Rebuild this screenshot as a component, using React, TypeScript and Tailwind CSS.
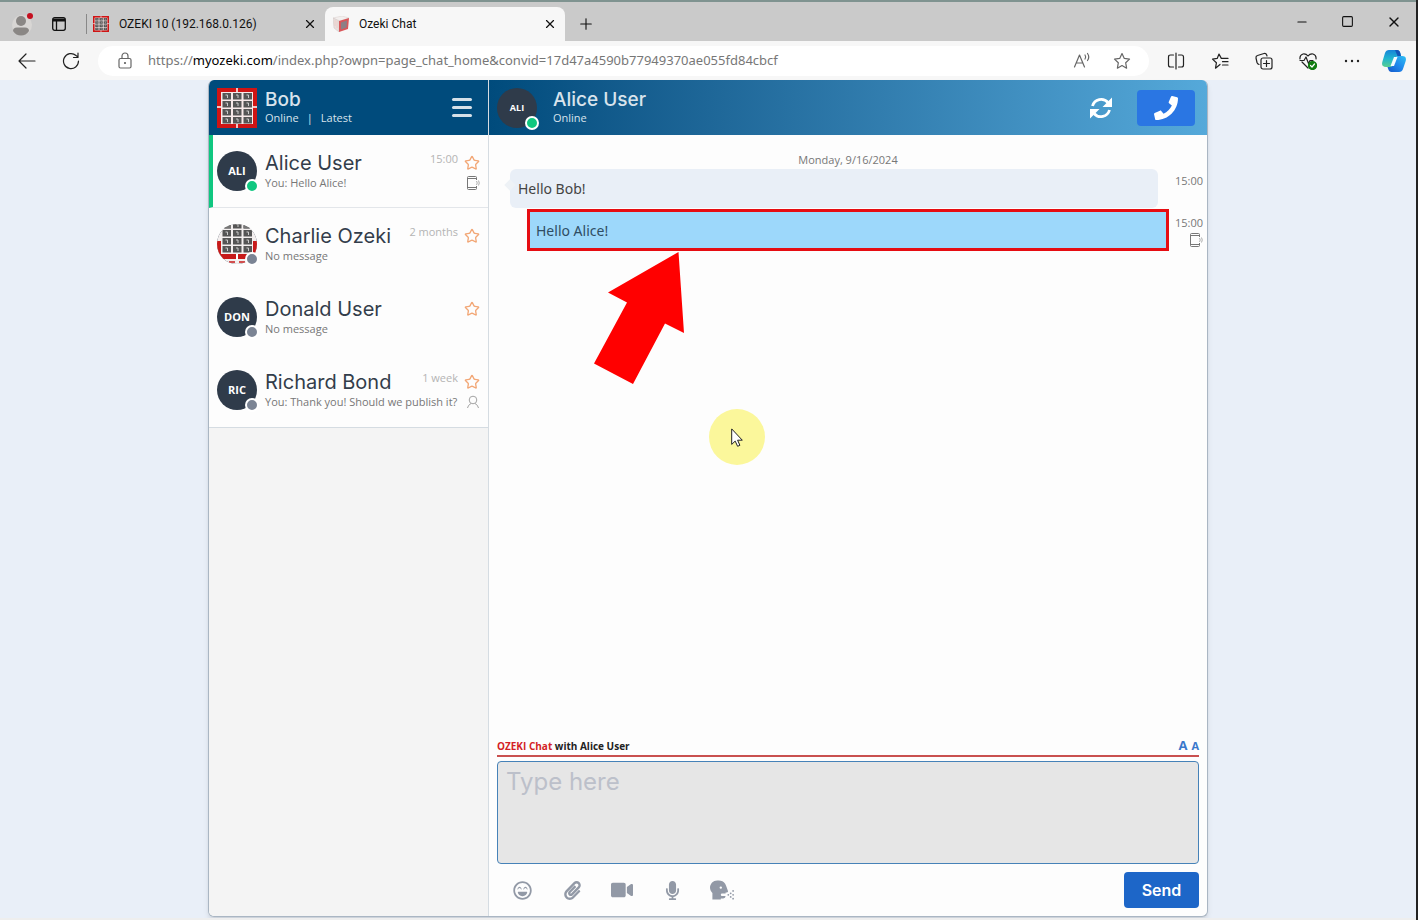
import React, { useState } from 'react';
import { FaHeadSideCough, FaMicrophone, FaPaperclip, FaPhone, FaRegLaughBeam, FaVideo } from 'react-icons/fa';
import { Minus, Plus, Square, Star, X } from 'lucide-react';

interface Contact {
    name: string;
    initials: string;
    message: string;
    time: string;
    online?: boolean;
    via?: 'phone' | 'person';
}

const contacts: Contact[] = [
    { name: 'Alice User', initials: 'ALI', message: 'You: Hello Alice!', time: '15:00', online: true, via: 'phone' },
    { name: 'Charlie Ozeki', initials: '', message: 'No message', time: '2 months' },
    { name: 'Donald User', initials: 'DON', message: 'No message', time: '' },
    { name: 'Richard Bond', initials: 'RIC', message: 'You: Thank you! Should we publish it?', time: '1 week', via: 'person' },
];

const columns = [4.5, 15, 25.5];
const rows = [5, 13, 21, 29];

function Keys({ x, y, marks }: { x: number; y: number; marks?: boolean }) {
    return (
        <g transform={`translate(${x} ${y})`}>
            {rows.map((row) =>
                columns.map((col) => (
                    <g key={`${col}-${row}`}>
                        <rect x={col + 1} y={row} width="8.500" height="6.500" fill="#555" />
                        {marks && <path d={`M${col + 4} ${row + 2}h2v3`} fill="none" stroke="#c9c9c9" strokeWidth="1" />}
                    </g>
                )),
            )}
        </g>
    );
}

function KeypadLogo({ className }: { className?: string }) {
    return (
        <svg viewBox="0 0 40 40" className={className} aria-hidden="true">
            <rect width="40" height="40" fill="#cf1414" />
            <path d="M20 0v5M20 35v5M0 19h5M35 19h5" stroke="#fff" strokeWidth="1.500" />
            <rect x="4" y="4" width="32" height="32" fill="#f7e9e9" />
            <Keys x={0} y={0} marks />
        </svg>
    );
}

function KeypadPhoto() {
    return (
        <svg viewBox="0 0 40 40" className="size-10 rounded-full" aria-hidden="true">
            <rect width="40" height="40" fill="#f3efef" />
            <path d="M0 17h4v13h32V17h4v18H0z" fill="#c71a1a" />
            <path d="M12 38h6M22 38h6" stroke="#c71a1a" strokeWidth="1.500" />
            <path d="M20 29v7" stroke="#fff" strokeWidth="2" />
            <rect x="5" y="0" width="30" height="30" fill="#f3efef" />
            <Keys x={0} y={-7} marks />
            <rect x="5.500" y="0" width="8.500" height="4.500" fill="#777" />
            <rect x="26.500" y="0" width="8.500" height="4.500" fill="#777" />
        </svg>
    );
}

function CubeIcon() {
    return (
        <svg viewBox="0 0 16 16" className="size-4" aria-hidden="true">
            <path d="M0 2l9-2 7 2-9 3z" fill="#f3efee" stroke="#d8cfcc" strokeWidth=".5" />
            <path d="M0 2l6 3v11l-5-4z" fill="#eadfdd" stroke="#cfc5c2" strokeWidth=".5" />
            <path d="M6 5l10-3-1 11-9 3z" fill="#d9575a" />
            <path d="M8 6.500l6-2-.5 7-5.500 2z" fill="#8d7f85" />
            <path d="M2 4v6M4 5v7" stroke="#ecc9c6" strokeWidth=".8" />
        </svg>
    );
}

function ReloadIcon() {
    return (
        <svg viewBox="0 0 24 24" className="size-6" aria-hidden="true">
            <path d="M3.500 10A9 9 0 0 1 19 6.500M20.500 14A9 9 0 0 1 5 17.500" fill="none" stroke="#fff" strokeWidth="2.800" />
            <path d="M23 1.500V11h-9.500zM1 22.500V13h9.500z" fill="#fff" />
        </svg>
    );
}

function PhoneWaveIcon() {
    return (
        <svg viewBox="0 0 14 16" fill="none" stroke="#777" className="h-4 w-3.5" aria-hidden="true">
            <path d="M10.500 5V2.500Q10.500 1.500 9.500 1.500h-7q-1 0-1 1v11q0 1 1 1h7q1 0 1-1V11" />
            <path d="M1.500 3.500h9M1.500 12.500h9" />
            <path d="M10.500 6q1.500 2 0 4M12.500 5.500q1.500 2.500 0 5" stroke="#999" strokeWidth=".8" />
        </svg>
    );
}

function PersonIcon() {
    return (
        <svg viewBox="0 0 14 14" fill="none" stroke="#a3a3a3" className="size-3.5" aria-hidden="true">
            <circle cx="7" cy="5" r="3.800" />
            <path d="M1.500 13q.5-3 3.500-4.500M12.500 13q-.5-3-3.500-4.500" />
        </svg>
    );
}

function ProfileIcon() {
    return (
        <svg viewBox="0 0 22 24" className="h-6 w-[22px]" aria-hidden="true">
            <circle cx="10" cy="13" r="10" fill="#d8d6d4" />
            <circle cx="9" cy="9" r="5" fill="#8a8785" />
            <path d="M1 19q0-3.500 4-3.500h8q4 0 4 3.500-3 4.500-8 4.500T1 19z" fill="#8a8785" />
            <circle cx="18" cy="4" r="3" fill="#c50f1f" />
        </svg>
    );
}

function CopilotIcon() {
    return (
        <svg viewBox="0 0 24 24" className="size-6" aria-hidden="true">
            <defs>
                <linearGradient id="cool" x1="0" y1="0" x2="0" y2="1">
                    <stop offset="0" stopColor="#1683d8" />
                    <stop offset=".5" stopColor="#20b4cf" />
                    <stop offset="1" stopColor="#59cf91" />
                </linearGradient>
                <linearGradient id="deep" x1="1" y1="0" x2="0" y2="1">
                    <stop offset="0" stopColor="#2fc0f3" />
                    <stop offset=".5" stopColor="#2088ec" />
                    <stop offset="1" stopColor="#1457c8" />
                </linearGradient>
            </defs>
            <path d="M7 1h8q2.500 0 3.300 3l.7 3h-3q-2 0-2.600 2l-2 7q-.6 2-2.400 2H4q-5 0-3.700-5L3 4q1-3 4-3z" fill="url(#cool)" />
            <path d="M17 23H9.500q-2.500 0-3.300-3L5.500 18H8q2.300 0 3-2.200l2-6.800q.6-2 3-2h4q5 0 3.700 5L21 20q-1 3-4 3z" fill="url(#deep)" />
            <path d="M13 1h2q2.500 0 3.300 3l.7 3h-3.500z" fill="#1354b8" />
            <path d="M12 8h3.500L12 17H8.500z" fill="#f4fbff" />
        </svg>
    );
}

function Avatar({ initials, online, small }: { initials: string; online?: boolean; small?: boolean }) {
    return (
        <span
            className={`relative flex size-10 shrink-0 items-center justify-center rounded-full bg-[#2f3b4a] font-bold text-white ${small ? 'text-[9px]' : 'text-[11px]'}`}
        >
            {initials || <KeypadPhoto />}
            <span
                className={`absolute -right-0.5 -bottom-0.5 size-3.5 rounded-full border-2 border-white ${online ? 'bg-[#10c780]' : 'bg-[#7b8494]'}`}
            />
        </span>
    );
}

function Tab({ title, active, children }: { title: string; active?: boolean; children: React.ReactNode }) {
    return (
        <div className={`flex h-[34px] w-60 items-center gap-2.5 rounded-t-lg px-2 ${active ? 'bg-[#f7f7f7]' : ''}`}>
            {children}
            <span className="flex-1 truncate">{title}</span>
            <button aria-label={`Close ${title}`}>
                <X size={14} strokeWidth={2} />
            </button>
        </div>
    );
}

function TitleBar() {
    return (
        <div className="flex h-[41px] shrink-0 items-end border-t-2 border-[#7f9390] bg-[#cacaca] pl-3 font-['Roboto','Open_Sans',sans-serif] text-[12px] text-[#111]">
            <div className="flex h-[34px] items-center">
                <button aria-label="Profile">
                    <ProfileIcon />
                </button>
                <button aria-label="Tab actions" className="ml-[18px]">
                    <svg viewBox="0 0 14 14" fill="none" stroke="#111" strokeWidth="1.300" className="size-3.5">
                        <rect x=".7" y=".7" width="12.600" height="12.600" rx="2" />
                        <path d="M1 3h12" strokeWidth="3" />
                        <path d="M4.500 4v9" />
                    </svg>
                </button>
                <span className="ml-5 h-5 w-px bg-[#888]" />
            </div>
            <div className="-ml-0.5 flex">
                <Tab title="OZEKI 10 (192.168.0.126)">
                    <KeypadLogo className="size-4" />
                </Tab>
                <Tab title="Ozeki Chat" active>
                    <CubeIcon />
                </Tab>
            </div>
            <button aria-label="New tab" className="ml-3 flex h-[34px] items-center">
                <Plus size={18} strokeWidth={1.5} />
            </button>
            <div className="ml-auto flex h-full items-center gap-8 pr-3.5">
                <button aria-label="Minimize">
                    <Minus size={14} strokeWidth={2} />
                </button>
                <button aria-label="Maximize">
                    <Square size={13} strokeWidth={2} />
                </button>
                <button aria-label="Close">
                    <X size={16} strokeWidth={2} />
                </button>
            </div>
        </div>
    );
}

function ToolIcon({ label, children }: { label: string; children: React.ReactNode }) {
    return (
        <button aria-label={label}>
            <svg viewBox="0 0 18 18" fill="none" stroke="currentColor" strokeWidth="1.200" strokeLinecap="round" strokeLinejoin="round" className="size-[18px]">
                {children}
            </svg>
        </button>
    );
}

function Toolbar() {
    return (
        <div className="flex h-[39px] shrink-0 items-center bg-[#f7f7f7] pr-2.5 pl-[18px] text-[#222]">
            <div className="flex gap-[26px]">
                <ToolIcon label="Back">
                    <path d="M17 9H1M8 2L1 9l7 7" />
                </ToolIcon>
                <ToolIcon label="Refresh">
                    <path d="M16.500 9A7.500 7.500 0 1 1 14 3.500L16 5M16 1v4.500h-4.500" />
                </ToolIcon>
            </div>
            <div className="ml-[18px] flex h-[30px] flex-1 items-center gap-[22px] rounded-full bg-white px-[18px] text-[#666]">
                <ToolIcon label="Site information">
                    <rect x="3" y="6.500" width="12" height="9.500" rx="1.500" />
                    <path d="M6 6V4a3 3 0 0 1 6 0v2" />
                    <circle cx="9" cy="11" r=".5" fill="currentColor" />
                </ToolIcon>
                <div className="-ml-2 flex-1 truncate font-['Noto_Sans','Open_Sans',sans-serif] text-[13px] text-[#777]">
                    https://<span className="text-black">myozeki.com</span>
                    /index.php?owpn=page_chat_home&amp;convid=17d47a4590b77949370ae055fd84cbcf
                </div>
                <ToolIcon label="Read aloud">
                    <path d="M1.500 15L6.500 3l5 12M3.200 11h6.600M12 3q1.500 2 0 4M14.500 1.500q2.500 3.500 0 7" />
                </ToolIcon>
                <ToolIcon label="Add to favorites">
                    <path d="M9 1.500l2.300 4.900 5.200.7-3.800 3.700.9 5.400L9 13.600l-4.600 2.600.9-5.400L1.500 7.100l5.200-.7z" />
                </ToolIcon>
            </div>
            <div className="ml-[18px] flex items-center gap-[26px]">
                <ToolIcon label="Split screen">
                    <path d="M6.500 3H3.500q-2 0-2 2v8q0 2 2 2h3M11.500 3h3q2 0 2 2v8q0 2-2 2h-3M9 1v16" />
                </ToolIcon>
                <ToolIcon label="Favorites">
                    <path d="M9 12.500l-4.500 3.700.9-5.400L1.500 7.100l4.700-.7L8 2l2.300 4.400H17M11.500 9.700H17M11.500 13H17" />
                </ToolIcon>
                <ToolIcon label="Collections">
                    <rect x="6" y="6" width="11" height="11" rx="2" />
                    <path d="M11.500 8.500v6M8.500 11.500h6M4 12.500Q2.500 12 2 10.500L1 6q-.3-2 1.500-2.500L9 1.500q2-.5 2.700 1.500l.3 1" />
                </ToolIcon>
                <ToolIcon label="Browser essentials">
                    <path d="M1 7Q.5 3 4 2q3-.5 5 2 2-2.500 5-2 3.500 1 3 5M3 10l6 6M1 8.500h4L7 5l2.500 6.500L11 8.500h3" />
                    <circle cx="13.500" cy="13.500" r="4" fill="#107c10" stroke="#107c10" />
                    <path d="M11.500 13.500l1.500 1.500 2.500-3" stroke="#fff" />
                </ToolIcon>
                <ToolIcon label="Settings and more">
                    <g fill="currentColor" stroke="none">
                        <circle cx="3" cy="9" r="1.200" />
                        <circle cx="9" cy="9" r="1.200" />
                        <circle cx="15" cy="9" r="1.200" />
                    </g>
                </ToolIcon>
            </div>
            <button aria-label="Copilot" className="ml-[21px]">
                <CopilotIcon />
            </button>
        </div>
    );
}

function ContactRow({ contact, selected }: { contact: Contact; selected?: boolean }) {
    return (
        <li
            className={`flex h-[73px] items-center gap-2 border-b pr-2 ${selected ? 'border-b-[#e3e6ea] border-l-4 border-l-[#10c780] pl-1' : 'border-b-transparent pl-2'}`}
        >
            <Avatar initials={contact.initials} online={contact.online} />
            <div className="min-w-0 flex-1">
                <div className="flex h-6 items-center gap-1.5">
                    <span className="flex-1 truncate font-['Inter',sans-serif] text-[20px] leading-6 text-[#333d4b]">{contact.name}</span>
                    <span className="self-start text-[11px] leading-4 text-[#b4b4b4]">{contact.time}</span>
                    <button aria-label={`Mark ${contact.name} as favourite`}>
                        <Star size={16} strokeWidth={2} className="text-[#f2a776]" />
                    </button>
                </div>
                <div className="flex h-4 items-center justify-between">
                    <span className="text-[11px] whitespace-nowrap text-[#777]">{contact.message}</span>
                    {contact.via === 'phone' && <PhoneWaveIcon />}
                    {contact.via === 'person' && <PersonIcon />}
                </div>
            </div>
        </li>
    );
}

function Sidebar() {
    return (
        <aside className="flex w-[280px] shrink-0 flex-col border-r border-[#d5dce2] bg-[#f4f4f4]">
            <header className="flex h-[55px] shrink-0 items-center gap-2 bg-[#004b7c] px-2 text-[#d8e3ec]">
                <KeypadLogo className="size-10" />
                <div className="flex-1">
                    <div className="font-['Inter',sans-serif] text-[19px] leading-5 font-medium">Bob</div>
                    <div className="flex gap-2 text-[11px] leading-4">
                        <span>Online</span>
                        <span>|</span>
                        <span>Latest</span>
                    </div>
                </div>
                <button aria-label="Menu" className="mr-2 flex flex-col gap-[5px]">
                    <span className="h-[3px] w-5 rounded-full bg-[#d5e0e8]" />
                    <span className="h-[3px] w-5 rounded-full bg-[#d5e0e8]" />
                    <span className="h-[3px] w-5 rounded-full bg-[#d5e0e8]" />
                </button>
            </header>
            <ul className="border-b border-[#d5dce2] bg-[#fdfdfd]">
                {contacts.map((contact, index) => (
                    <ContactRow key={contact.name} contact={contact} selected={index === 0} />
                ))}
            </ul>
        </aside>
    );
}

function Messages() {
    return (
        <div className="relative flex-1 pt-4 text-[11px] text-[#777]">
            <div className="h-[18px] text-center leading-[18px]">Monday, 9/16/2024</div>
            <div className="flex pr-1 pl-[21px]">
                <div className="relative flex h-[39px] flex-1 items-center rounded-md bg-[#e9eff7] px-2 font-['Noto_Sans','Open_Sans',sans-serif] text-[14px] text-[#444]">
                    <span className="absolute top-3 -left-1 size-2 rotate-45 bg-[#eef2f6]" />
                    Hello Bob!
                </div>
                <span className="w-[45px] pt-1 text-right">15:00</span>
            </div>
            <div className="mt-px flex pr-1 pl-[38px]">
                <div className="flex h-[42px] flex-1 items-center border-3 border-[#e60d12] bg-[#9dd8fb] px-1.5 font-['Noto_Sans','Open_Sans',sans-serif] text-[14px] text-[#2f4d63]">
                    Hello Alice!
                </div>
                <div className="flex w-[34px] flex-col items-end pt-1.5">
                    <span>15:00</span>
                    <PhoneWaveIcon />
                </div>
            </div>
            <svg viewBox="0 0 92 132" className="absolute top-[117px] left-[105px] h-[132px] w-[92px]" aria-hidden="true">
                <path d="M84.500 0L90 81 71 71.500 39 132 0 111.500 33 50.500 14 40.500z" fill="#ff0000" />
            </svg>
            <div className="absolute top-[274px] left-[220px] flex size-14 items-center justify-center rounded-full bg-[#fbf79b]">
                <svg viewBox="0 0 12 19" className="h-[19px] w-3" aria-hidden="true">
                    <path d="M.7.9v15.500l3.500-3.300 2.400 5.200 2.300-1-2.300-5.100h4.700z" fill="#fff" stroke="#222" strokeWidth="1" />
                </svg>
            </div>
        </div>
    );
}

function Composer() {
    const [text, setText] = useState('');

    return (
        <div className="px-2 pb-2">
            <div className="flex h-5 items-center justify-between border-b-2 border-[#c9504f] text-[10px] font-bold text-[#222]">
                <span>
                    <span className="text-[#d31f26]">OZEKI Chat</span> with Alice User
                </span>
                <span className="flex items-baseline gap-1 text-[#3a78cc]">
                    <button aria-label="Larger text" className="text-[13px]">A</button>
                    <button aria-label="Smaller text" className="text-[11px]">A</button>
                </span>
            </div>
            <textarea
                aria-label="Message"
                placeholder="Type here"
                value={text}
                onChange={(e) => setText(e.target.value)}
                className="mt-1 block h-[103px] w-full resize-none rounded border border-[#4682b8] bg-[#e6e6e6] px-2 py-1 font-['Inter',sans-serif] text-[24px] leading-8 outline-none placeholder:text-[#bcc0ca]"
            />
            <div className="mt-2 flex h-9 items-center text-[#9299a6]">
                <div className="flex flex-1 items-center">
                    <button aria-label="Emoji" className="flex w-[50px] justify-center">
                        <FaRegLaughBeam size={19} />
                    </button>
                    <button aria-label="Attach file" className="flex w-[50px] justify-center">
                        <FaPaperclip size={19} />
                    </button>
                    <button aria-label="Video" className="flex w-[50px] justify-center">
                        <FaVideo size={22} />
                    </button>
                    <button aria-label="Voice" className="flex w-[50px] justify-center">
                        <FaMicrophone size={19} />
                    </button>
                    <button aria-label="Speech" className="flex w-[50px] justify-center">
                        <FaHeadSideCough size={24} />
                    </button>
                </div>
                <button className="h-9 w-[75px] rounded bg-[#1d66c8] font-['Inter',sans-serif] text-[16px] font-semibold text-white">Send</button>
            </div>
        </div>
    );
}

export default function App() {
    return (
        <div className="flex h-screen flex-col border-r-2 border-[#222] bg-[#e9eff8]">
            <TitleBar />
            <Toolbar />
            <main className="flex min-h-0 flex-1 justify-center pb-px font-['Open_Sans',sans-serif]">
                <div className="flex w-full max-w-[1000px] overflow-hidden rounded-md border-r border-b border-l border-[#aab6c3] bg-[#fdfdfd] shadow-md">
                    <Sidebar />
                    <section className="flex min-w-0 flex-1 flex-col">
                        <header className="flex h-[55px] shrink-0 items-center bg-linear-to-r from-[#004b7c] to-[#55a9da] pr-3 pl-2 text-[#d8e3ec]">
                            <Avatar initials="ALI" online small />
                            <div className="ml-4 flex-1">
                                <div className="font-['Inter',sans-serif] text-[19px] leading-5 font-medium">Alice User</div>
                                <div className="text-[11px] leading-4">Online</div>
                            </div>
                            <button aria-label="Reload" className="mr-6 text-white">
                                <ReloadIcon />
                            </button>
                            <button aria-label="Call" className="flex h-9 w-[58px] items-center justify-center rounded bg-[#2a76e3] text-white">
                                <FaPhone size={24} />
                            </button>
                        </header>
                        <Messages />
                        <Composer />
                    </section>
                </div>
            </main>
            <div className="h-0.5 shrink-0 bg-[#eee]" />
        </div>
    );
}
